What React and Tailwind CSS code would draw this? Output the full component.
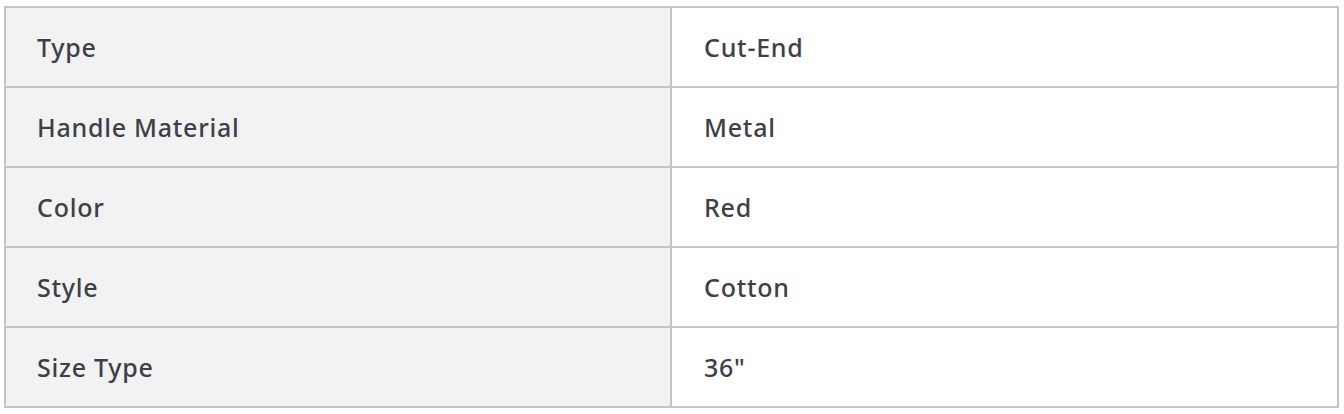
import React from 'react';

const specs = [
  { label: 'Type', value: 'Cut-End' },
  { label: 'Handle Material', value: 'Metal' },
  { label: 'Color', value: 'Red' },
  { label: 'Style', value: 'Cotton' },
  { label: 'Size Type', value: '36"' },
];

const App = () => {
  return (
    <div className="bg-white px-[4px] pt-[6px]" style={{ fontFamily: '"Noto Sans", sans-serif' }}>
      <table className="w-[1335px] border-collapse border-2 border-[#c4c4c4] table-fixed">
        <tbody>
          {specs.map((row) => (
            <tr key={row.label} className="h-[80px]">
              <td className="w-[666px] border-2 border-[#c4c4c4] bg-[#f2f2f2] pl-[31px] pt-[2px] text-[25px] font-medium tracking-[0.03em] text-[#3b404b]">
                {row.label}
              </td>
              <td className="border-2 border-[#c4c4c4] bg-white pl-[32px] pt-[2px] text-[25px] font-medium tracking-[0.03em] text-[#3b404b]">
                {row.value}
              </td>
            </tr>
          ))}
        </tbody>
      </table>
    </div>
  );
};

export default App;
